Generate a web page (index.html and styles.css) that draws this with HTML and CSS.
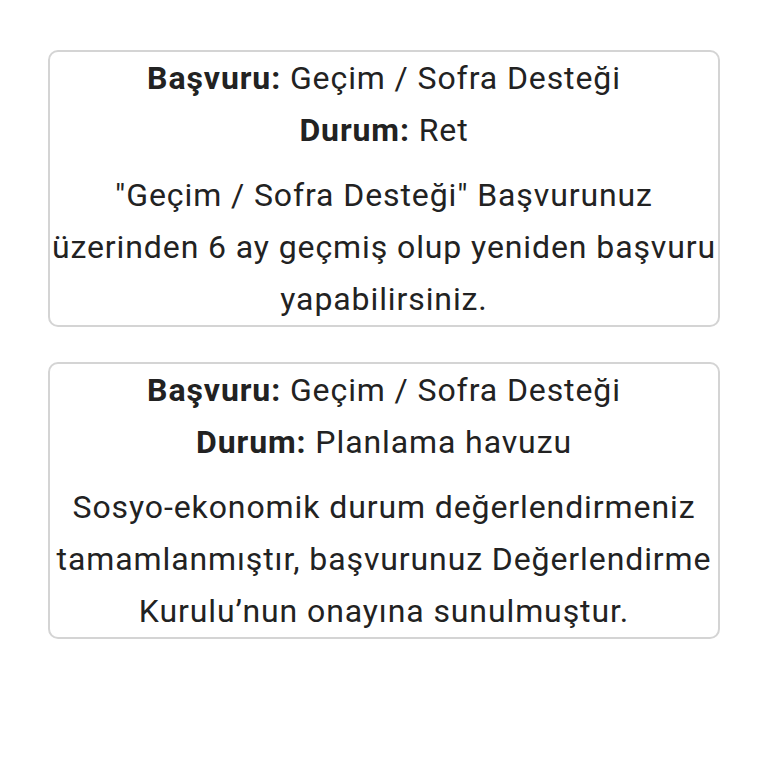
FILE: index.html
```html
<!DOCTYPE html>
<html lang="tr">
<head>
    <meta charset="UTF-8">
    <meta name="viewport" content="width=device-width, initial-scale=1.0">
    <title>Başvurularım</title>
    <link rel="stylesheet" href="styles.css">
</head>
<body>

    <div class="applications">
        <div class="app-card">
            <div class="app-line"><b>Başvuru:</b> Geçim / Sofra Desteği</div>
            <div class="app-line"><b>Durum:</b> Ret</div>
            <p class="app-note">"Geçim / Sofra Desteği" Başvurunuz üzerinden 6 ay geçmiş olup yeniden başvuru yapabilirsiniz.</p>
        </div>

        <div class="app-card">
            <div class="app-line"><b>Başvuru:</b> Geçim / Sofra Desteği</div>
            <div class="app-line"><b>Durum:</b> Planlama havuzu</div>
            <p class="app-note">Sosyo-ekonomik durum değerlendirmeniz tamamlanmıştır, başvurunuz Değerlendirme Kurulu’nun onayına sunulmuştur.</p>
        </div>
    </div>

</body>
</html>
```

FILE: styles.css
```css
body {
    font-family: Roboto, "Noto Sans", sans-serif;
    background-color: #ffffff;
    color: #222222;
    margin: 0;
    padding: 0;
}

.applications {
    display: flex;
    flex-direction: column;
    gap: 35px;
    padding: 50px 48px 0 48px;
}

.app-card {
    border: 2px solid #d4d4d4;
    border-radius: 10px;
    text-align: center;
    font-size: 32px;
    letter-spacing: 0.9px;
    line-height: 52px;
}

.app-line b {
    font-weight: 700;
}

.app-note {
    margin: 13px 0 0 0;
}
```
